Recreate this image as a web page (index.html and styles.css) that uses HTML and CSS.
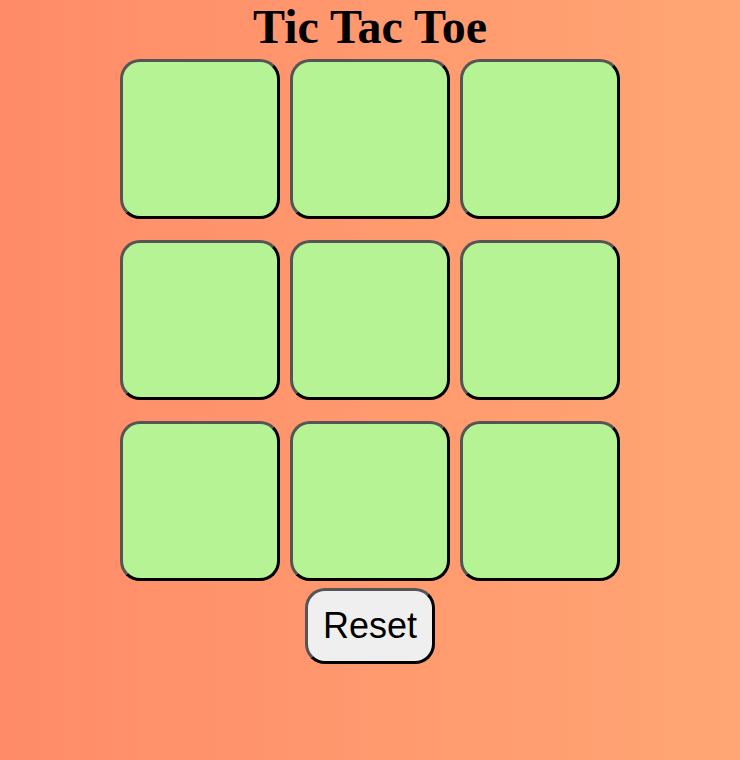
FILE: index.html
```html
<!DOCTYPE html>
<html>
<head>
<meta charset="utf-8">
<link rel="stylesheet" href="styles.css">
</head>
<body>
<div class="app">
  <h1 class="title">Tic Tac Toe</h1>
  <div class="board">
    <button class="cell"></button>
    <button class="cell"></button>
    <button class="cell"></button>
    <button class="cell"></button>
    <button class="cell"></button>
    <button class="cell"></button>
    <button class="cell"></button>
    <button class="cell"></button>
    <button class="cell"></button>
  </div>
  <button class="reset">Reset</button>
</div>
</body>
</html>
```

FILE: styles.css
```css
html, body {
  margin: 0;
  padding: 0;
  height: 100%;
}
body {
  background: linear-gradient(to right, #ff8b68, #ffa674);
  font-family: "Liberation Serif", "Times New Roman", serif;
}
.app {
  display: flex;
  flex-direction: column;
  align-items: center;
}
.title {
  margin: 0;
  font-size: 48px;
  line-height: 53px;
  font-weight: bold;
  color: #000;
}
.board {
  margin-top: 6px;
  display: grid;
  grid-template-columns: repeat(3, 160px);
  grid-auto-rows: 160px;
  column-gap: 10px;
  row-gap: 21px;
}
.cell {
  box-sizing: border-box;
  width: 160px;
  height: 160px;
  margin: 0;
  padding: 0;
  background: #b6f394;
  border: 3px solid;
  border-color: #555 #000 #000 #555;
  border-radius: 20px;
}
.reset {
  box-sizing: border-box;
  margin-top: 7px;
  width: 130px;
  height: 76px;
  padding: 0;
  background: #efefef;
  border: 3px solid;
  border-color: #555 #000 #000 #555;
  border-radius: 20px;
  font-family: "Liberation Sans", Arial, sans-serif;
  font-size: 36px;
  color: #000;
}
```
